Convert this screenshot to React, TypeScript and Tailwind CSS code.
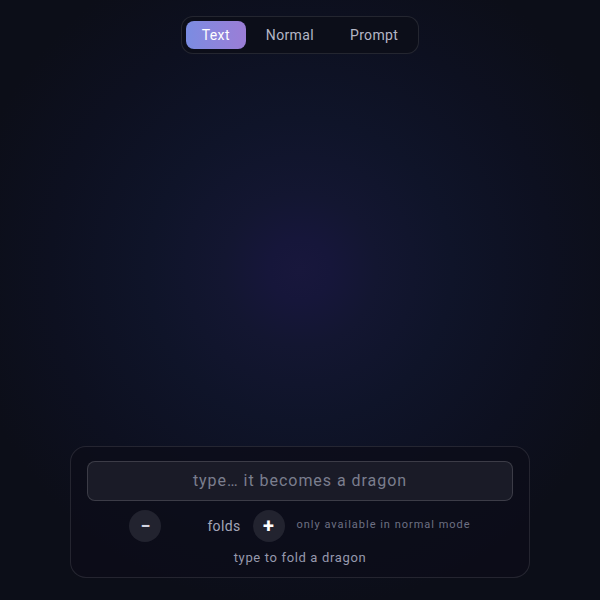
import { useState } from "react";

const MODES = ["Text", "Normal", "Prompt"] as const;

export default function App() {
  const [mode, setMode] = useState<(typeof MODES)[number]>("Text");
  const [text, setText] = useState("");

  return (
    <div
      className="relative flex h-[600px] w-[600px] flex-col items-center overflow-hidden bg-[#0c0e18] bg-[radial-gradient(circle_at_50%_45%,#18173c_0%,#16163a_7%,#131631_17%,#0f1429_34%,#0d1020_56%,#0c0e18_76%)]"
      style={{ fontFamily: "Roboto, 'Noto Sans', sans-serif" }}
    >
      <div className="mt-4 flex gap-1 rounded-xl border border-white/10 bg-[#0c0e19] p-1">
        {MODES.map((m) => (
          <button
            key={m}
            onClick={() => setMode(m)}
            className={
              m === mode
                ? "h-7 rounded-lg bg-gradient-to-r from-[#7a8ce2] to-[#9b7dd6] px-4 text-sm tracking-wide text-white"
                : "h-7 rounded-lg px-4 text-sm tracking-wide text-[#b4b6c6]"
            }
          >
            {m}
          </button>
        ))}
      </div>

      <div className="flex-1" />

      <div className="mb-[22px] flex w-[460px] flex-col items-center rounded-2xl border border-white/10 bg-[#0c0d19]/80 px-4 pb-[10px] pt-[14px]">
        <input
          value={text}
          onChange={(e) => setText(e.target.value)}
          placeholder="type… it becomes a dragon"
          className="h-10 w-full rounded-lg border border-white/15 bg-[#1a1b27] px-3 text-center text-base tracking-[0.06em] text-[#c8cad8] outline-none placeholder:text-[#7b7e8e]"
        />
        <div className="mt-[9px] flex items-center gap-3">
          <button className="flex h-8 w-8 items-center justify-center rounded-full bg-[#22232f] text-lg font-bold text-[#d4d6e2]">
            −
          </button>
          <span className="w-[22px]" />
          <span className="text-sm tracking-wide text-[#a3a6b8]">folds</span>
          <button className="flex h-8 w-8 items-center justify-center rounded-full bg-[#22232f] text-xl font-bold text-white">
            +
          </button>
          <span className="text-[11px] tracking-[0.09em] text-[#6d7083]">
            only available in normal mode
          </span>
        </div>
        <p className="mt-[6px] text-[13px] tracking-wider text-[#9799ad]">type to fold a dragon</p>
      </div>
    </div>
  );
}
